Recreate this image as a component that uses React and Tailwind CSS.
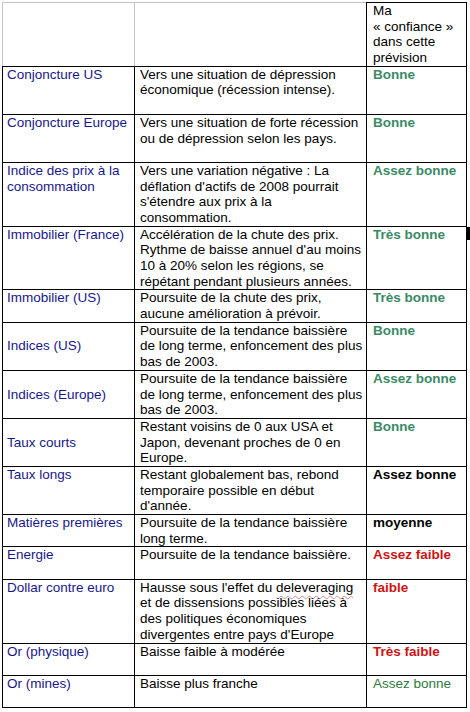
import React from 'react';

const tones = {
  green: 'font-bold text-[#3b8a66]',
  black: 'font-bold text-black',
  red: 'font-bold text-[#cc1414]',
  plain: 'font-normal text-[#2f7a3c]',
};

const rows = [
  {
    label: ['Conjoncture US'],
    desc: ['Vers une situation de dépression', 'économique (récession intense).', ''],
    conf: 'Bonne',
    tone: 'green',
  },
  {
    label: ['Conjoncture Europe'],
    desc: ['Vers une situation de forte récession', 'ou de dépression selon les pays.', ''],
    conf: 'Bonne',
    tone: 'green',
  },
  {
    label: ['Indice des prix à la', 'consommation'],
    desc: [
      'Vers une variation négative : La',
      "déflation d'actifs de 2008 pourrait",
      "s'étendre aux prix à la",
      'consommation.',
    ],
    conf: 'Assez bonne',
    tone: 'green',
  },
  {
    label: ['Immobilier (France)'],
    desc: [
      'Accélération de la chute des prix.',
      "Rythme de baisse annuel d'au moins",
      '10 à 20% selon les régions, se',
      'répétant pendant plusieurs années.',
    ],
    conf: 'Très bonne',
    tone: 'green',
    marker: true,
  },
  {
    label: ['Immobilier (US)'],
    desc: ['Poursuite de la chute des prix,', 'aucune amélioration à prévoir.'],
    conf: 'Très bonne',
    tone: 'green',
  },
  {
    label: ['Indices (US)'],
    middle: true,
    desc: ['Poursuite de la tendance baissière', 'de long terme, enfoncement des plus', 'bas de 2003.'],
    conf: 'Bonne',
    tone: 'green',
  },
  {
    label: ['Indices (Europe)'],
    middle: true,
    desc: ['Poursuite de la tendance baissière', 'de long terme, enfoncement des plus', 'bas de 2003.'],
    conf: 'Assez bonne',
    tone: 'green',
  },
  {
    label: ['Taux courts'],
    middle: true,
    desc: ['Restant voisins de 0 aux USA et', 'Japon, devenant proches de 0 en', 'Europe.'],
    conf: 'Bonne',
    tone: 'green',
  },
  {
    label: ['Taux longs'],
    desc: ['Restant globalement bas, rebond', 'temporaire possible en début', "d'année."],
    conf: 'Assez bonne',
    tone: 'black',
  },
  {
    label: ['Matières premières'],
    desc: ['Poursuite de la tendance baissière', 'long terme.'],
    conf: 'moyenne',
    tone: 'black',
  },
  {
    label: ['Energie'],
    desc: ['Poursuite de la tendance baissière.', ''],
    conf: 'Assez faible',
    tone: 'red',
  },
  {
    label: ['Dollar contre euro'],
    desc: [
      'deleveraging',
      'et de dissensions possibles liées à',
      'des politiques économiques',
      "divergentes entre pays d'Europe",
    ],
    conf: 'faible',
    tone: 'red',
  },
  {
    label: ['Or (physique)'],
    desc: ['Baisse faible à modérée', ''],
    conf: 'Très faible',
    tone: 'red',
  },
  {
    label: ['Or (mines)'],
    desc: ['Baisse plus franche', ''],
    conf: 'Assez bonne',
    tone: 'plain',
  },
];

const Line = ({ children }) => (
  <div className="h-[15.7px] leading-[15.7px] whitespace-nowrap">{children || '\u00a0'}</div>
);

const DescLine = ({ text }) => {
  if (text === 'deleveraging') {
    return (
      <Line>
        Hausse sous l'effet du{' '}
        <span className="underline decoration-wavy decoration-[#c79090] decoration-1 underline-offset-[3px]">
          deleveraging
        </span>
      </Line>
    );
  }
  return <Line>{text}</Line>;
};

export default function App() {
  return (
    <div className="min-h-screen bg-white pt-[2px] pl-[2px] font-['Liberation_Sans',Arial,sans-serif] text-[13.5px] text-black">
      <div className="grid w-[468px] grid-cols-[132px_232px_101px_3px]">
        {/* header */}
        <div className="border-l border-t border-[#c4c4c4]" />
        <div className="border-l border-t border-[#c4c4c4]" />
        <div className="border-x border-t border-black pl-[6px]">
          <Line>Ma</Line>
          <Line>« confiance »</Line>
          <Line>dans cette</Line>
          <Line>prévision</Line>
        </div>
        <div />

        {rows.map((row, i) => {
          const last = i === rows.length - 1;
          const bottom = last ? 'border-b' : '';
          return (
            <React.Fragment key={i}>
              <div
                className={`flex flex-col border-l border-t border-black pl-[4px] text-[#17178a] ${bottom} ${
                  row.middle ? 'justify-center' : 'justify-start'
                }`}
              >
                {row.label.map((l, j) => (
                  <Line key={j}>{l}</Line>
                ))}
              </div>
              <div className={`border-l border-t border-black pl-[5px] ${bottom}`}>
                {row.desc.map((d, j) => (
                  <DescLine key={j} text={d} />
                ))}
              </div>
              <div className={`border-x border-t border-black pl-[6px] ${bottom}`}>
                <Line>
                  <span className={tones[row.tone]}>{row.conf}</span>
                </Line>
              </div>
              <div>{row.marker && <div className="mt-[1px] h-[13px] w-[3px] bg-black" />}</div>
            </React.Fragment>
          );
        })}
      </div>
    </div>
  );
}
